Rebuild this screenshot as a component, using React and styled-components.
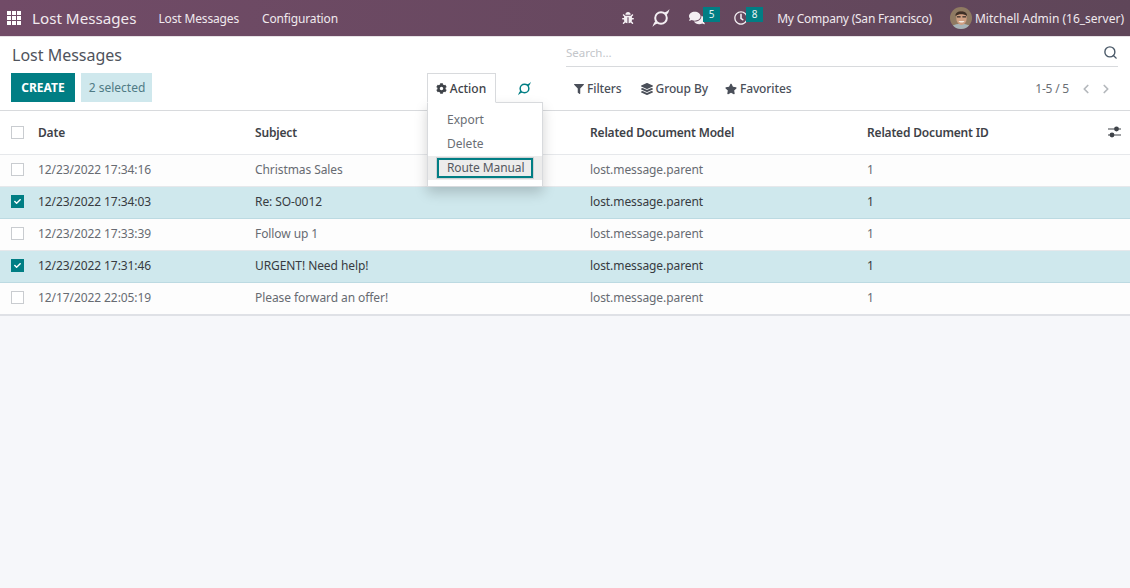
import React from 'react';
import styled, {createGlobalStyle} from 'styled-components';
import {FaBug, FaComments, FaRegClock, FaCog, FaFilter, FaLayerGroup, FaStar, FaCheck} from 'react-icons/fa';
import {FiSearch, FiChevronLeft, FiChevronRight} from 'react-icons/fi';

const GlobalStyle = createGlobalStyle`
    html, body {
        margin: 0;
        background: #f6f7fa;
    }
    body {
        font-family: "Noto Sans", sans-serif;
        font-size: 12px;
        color: #4a4f59;
    }
`;

const Page = styled.div`
    width: 1130px;
    height: 588px;
    overflow: hidden;
    background: #f6f7fa;
`;

const NavBar = styled.header`
    height: 36px;
    display: flex;
    align-items: center;
    padding: 0 6px 0 7px;
    background: linear-gradient(90deg, #714b67, #5f4659);
    color: #f0e9ee;
    border-bottom: 1px solid #e6e2e5;
`;

const AppsGrid = styled.div`
    display: grid;
    grid-template-columns: repeat(3, 4px);
    grid-auto-rows: 4px;
    gap: 1px;
    margin-right: 11px;
    span {
        background: #fff;
    }
`;

const Brand = styled.span`
    font-size: 15.2px;
    margin-right: 22px;
`;

const NavLink = styled.span`
    font-size: 12px;
    letter-spacing: -0.15px;
    margin-right: 23px;
`;

const SysTray = styled.div`
    margin-left: auto;
    display: flex;
    align-items: center;
`;

const TrayIcon = styled.span`
    display: flex;
    align-items: center;
    position: relative;
    margin-left: ${p => p.$gap || 0}px;
    color: #f4eff3;
`;

const TrayBadge = styled.span`
    position: absolute;
    left: ${p => p.$left}px;
    top: ${p => p.$top}px;
    width: 17px;
    height: 15px;
    background: #017e84;
    color: #e8f4f4;
    font-size: 10px;
    line-height: 15px;
    text-align: center;
`;

const TrayText = styled.span`
    font-size: 12px;
    letter-spacing: ${p => p.$tight || 0}px;
    margin-left: ${p => p.$gap}px;
    white-space: nowrap;
`;

const ControlPanel = styled.section`
    height: 73px;
    display: grid;
    grid-template-columns: 566px 552px;
    background: #fff;
    border-bottom: 1px solid #d8dadd;
`;

const LeftPanel = styled.div`
    display: flex;
    flex-direction: column;
    padding-left: 12px;
`;

const Title = styled.h1`
    margin: 0;
    height: 36px;
    line-height: 37px;
    font-size: 16px;
    font-weight: 400;
    color: #4f535c;
`;

const ButtonRow = styled.div`
    display: flex;
    align-items: flex-start;
    position: relative;
`;

const CreateButton = styled.button`
    width: 64px;
    height: 29px;
    margin-left: -1px;
    padding: 0;
    background: #017e84;
    border: 1px solid #017e84;
    color: #fff;
    font: 700 12px "Noto Sans", sans-serif;
`;

const SelectedBadge = styled.div`
    width: 71px;
    height: 29px;
    margin-left: 6px;
    padding-left: 1px;
    box-sizing: border-box;
    background: #cfe8ed;
    color: #4f7b85;
    font-size: 12px;
    line-height: 29px;
    text-align: center;
`;

const ActionWrap = styled.div`
    position: relative;
    margin-left: 275px;
`;

const ActionButton = styled.button`
    position: relative;
    z-index: 3;
    width: 69px;
    height: 30px;
    padding: 0 1px 0 0;
    display: flex;
    align-items: center;
    justify-content: center;
    gap: 3px;
    background: #fff;
    border: 1px solid #d8dadd;
    border-bottom-color: #fff;
    color: #3e4248;
    font: 500 12px "Noto Sans", sans-serif;
`;

const DropMenu = styled.div`
    position: absolute;
    z-index: 2;
    left: 0;
    top: 29px;
    width: 116px;
    height: 85px;
    box-sizing: border-box;
    padding-top: 5px;
    background: #fff;
    border: 1px solid #d8dadd;
    box-shadow: 0 6px 12px rgba(0, 0, 0, 0.18);
`;

const MenuItem = styled.div`
    height: 24px;
    line-height: 24px;
    padding-left: 19px;
    font-size: 12px;
    color: #6a6e74;
`;

const ActiveItem = styled(MenuItem)`
    background: #ececec;
    padding: 2px 0 0 9px;
    height: 22px;
    color: #55595f;
`;

const FocusBox = styled.div`
    height: 20px;
    width: 96px;
    box-sizing: border-box;
    border: 2px solid #017e84;
    outline: 1px solid #cfd2d4;
    padding-left: 8px;
    white-space: nowrap;
    line-height: 16px;
    letter-spacing: -0.1px;
`;

const SyncButton = styled.span`
    margin: 8px 0 0 21px;
    display: flex;
`;

const RightPanel = styled.div`
    display: flex;
    flex-direction: column;
`;

const SearchBar = styled.div`
    height: 28px;
    margin-top: 1px;
    display: flex;
    align-items: center;
    justify-content: space-between;
    border-bottom: 1px solid #d8dadd;
    color: #c3c6ca;
    font-size: 11.5px;
    svg {
        color: #4a5968;
        stroke-width: 2.2;
    }
`;

const FilterRow = styled.div`
    display: flex;
    align-items: center;
    height: 43px;
    padding-left: 8px;
`;

const FilterItem = styled.span`
    display: flex;
    align-items: center;
    gap: 3px;
    margin-right: ${p => p.$gap || 18}px;
    font-size: 12px;
    font-weight: 500;
    letter-spacing: -0.1px;
    color: #4a4f59;
`;

const Pager = styled.div`
    margin-left: auto;
    margin-right: 5px;
    display: flex;
    align-items: center;
    font-size: 12px;
    letter-spacing: -0.2px;
    color: #6a6e74;
    svg {
        color: #b4b8bc;
        stroke-width: 3;
        margin-left: 6px;
    }
    span {
        margin-right: 4px;
    }
`;

const Columns = styled.div`
    display: grid;
    grid-template-columns: 38px 217px 335px 277px 1fr 30px;
    align-items: center;
`;

const HeaderRow = styled(Columns)`
    height: 42px;
    padding-bottom: 1px;
    background: #fff;
    border-bottom: 1px solid #e6e8eb;
    font-weight: 600;
    letter-spacing: -0.18px;
    color: #3e4248;
    font-size: 12px;
`;

const Row = styled(Columns)`
    height: 29px;
    padding-bottom: 2px;
    background: ${p => (p.$selected ? '#cfe8ed' : '#fdfdfd')};
    border-bottom: 1px solid ${p => (p.$selected ? '#bcdae2' : '#e6e8eb')};
    color: ${p => (p.$selected ? '#373b41' : '#676b72')};
    font-size: 12px;
    letter-spacing: -0.08px;
    &:last-child {
        border-bottom: 2px solid #dfe1e6;
    }
`;

const CheckBox = styled.span`
    width: 13px;
    height: 13px;
    margin-left: 11px;
    box-sizing: border-box;
    display: flex;
    align-items: center;
    justify-content: center;
    background: ${p => (p.$checked ? '#017e84' : '#fff')};
    border: 1px solid ${p => (p.$checked ? '#017e84' : '#c9ccd0')};
    color: #fff;
`;

const OptionsCell = styled.span`
    display: flex;
    justify-content: flex-end;
    padding-right: 9px;
`;

const OdooSync = ({size, color}) => (
    <svg width={size} height={size} viewBox="0 0 20 20">
        <circle cx="10" cy="10" r="5.8" fill="none" stroke={color} strokeWidth="2" />
        <path d="M18.5 1 C17 3 15.5 4 13 4.5 L15.5 7 C17 5.5 18 3.5 18.5 1Z" fill={color} />
        <path d="M1.5 19 C3 17 4.5 16 7 15.5 L4.5 13 C3 14.5 2 16.5 1.5 19Z" fill={color} />
    </svg>
);

const SlidersIcon = () => (
    <svg width="13" height="12" viewBox="0 0 13 12" fill="#3e4248">
        <rect x="0" y="2.5" width="13" height="1" />
        <rect x="0" y="8.5" width="13" height="1" />
        <circle cx="8.5" cy="3" r="2.4" />
        <circle cx="4" cy="9" r="2.4" />
    </svg>
);

const Avatar = () => (
    <svg width="22" height="22" viewBox="0 0 22 22">
        <clipPath id="avatar-clip"><circle cx="11" cy="11" r="11" /></clipPath>
        <g clipPath="url(#avatar-clip)">
            <rect width="22" height="22" fill="#8f7a62" />
            <path d="M0 22 C2 17 7 17 11 17 C15 17 20 17 22 22Z" fill="#a8b4b8" />
            <ellipse cx="11.5" cy="11" rx="5.2" ry="7" fill="#cf9f82" />
            <path d="M5.5 9 C4.5 2.5 18 2.5 17 9 C14 6.5 8.5 6.5 5.5 9Z" fill="#3e2f26" />
            <rect x="7" y="9" width="3.6" height="1.6" fill="#54433a" />
            <rect x="12.4" y="9" width="3.6" height="1.6" fill="#54433a" />
            <path d="M8.5 14 C9.5 16 13.5 16 14.5 14Z" fill="#f3ece5" />
        </g>
    </svg>
);

const rows = [
    {date: '12/23/2022 17:34:16', subject: 'Christmas Sales'},
    {date: '12/23/2022 17:34:03', subject: 'Re: SO-0012', selected: true},
    {date: '12/23/2022 17:33:39', subject: 'Follow up 1'},
    {date: '12/23/2022 17:31:46', subject: 'URGENT! Need help!', selected: true},
    {date: '12/17/2022 22:05:19', subject: 'Please forward an offer!'},
];

const App = () => (
    <Page>
        <GlobalStyle />
        <NavBar>
            <AppsGrid>
                {Array.from({length: 9}, (_, i) => <span key={i} />)}
            </AppsGrid>
            <Brand>Lost Messages</Brand>
            <NavLink>Lost Messages</NavLink>
            <NavLink>Configuration</NavLink>
            <SysTray>
                <TrayIcon><FaBug size={12} /></TrayIcon>
                <TrayIcon $gap={17}><OdooSync size={20} color="#f4eff3" /></TrayIcon>
                <TrayIcon $gap={18}>
                    <FaComments size={16} />
                    <TrayBadge $left={14} $top={-3}>5</TrayBadge>
                </TrayIcon>
                <TrayIcon $gap={29}>
                    <FaRegClock size={14} />
                    <TrayBadge $left={12} $top={-4}>8</TrayBadge>
                </TrayIcon>
                <TrayText $gap={29} $tight={-0.23}>My Company (San Francisco)</TrayText>
                <TrayIcon $gap={18}><Avatar /></TrayIcon>
                <TrayText $gap={3}>Mitchell Admin (16_server)</TrayText>
            </SysTray>
        </NavBar>

        <ControlPanel>
            <LeftPanel>
                <Title>Lost Messages</Title>
                <ButtonRow>
                    <CreateButton>CREATE</CreateButton>
                    <SelectedBadge>2 selected</SelectedBadge>
                    <ActionWrap>
                        <ActionButton><FaCog size={11} />Action</ActionButton>
                        <DropMenu>
                            <MenuItem>Export</MenuItem>
                            <MenuItem>Delete</MenuItem>
                            <ActiveItem><FocusBox>Route Manual</FocusBox></ActiveItem>
                        </DropMenu>
                    </ActionWrap>
                    <SyncButton><OdooSync size={15} color="#017e84" /></SyncButton>
                </ButtonRow>
            </LeftPanel>
            <RightPanel>
                <SearchBar>Search...<FiSearch size={15} /></SearchBar>
                <FilterRow>
                    <FilterItem $gap={19}><FaFilter size={10} />Filters</FilterItem>
                    <FilterItem $gap={17}><FaLayerGroup size={12} />Group By</FilterItem>
                    <FilterItem><FaStar size={12} />Favorites</FilterItem>
                    <Pager>
                        <span>1-5 / 5</span>
                        <FiChevronLeft size={14} />
                        <FiChevronRight size={14} />
                    </Pager>
                </FilterRow>
            </RightPanel>
        </ControlPanel>

        <HeaderRow>
            <CheckBox />
            <span>Date</span>
            <span>Subject</span>
            <span>Related Document Model</span>
            <span>Related Document ID</span>
            <OptionsCell><SlidersIcon /></OptionsCell>
        </HeaderRow>
        {rows.map(row => (
            <Row key={row.date} $selected={row.selected}>
                <CheckBox $checked={row.selected}>
                    {row.selected && <FaCheck size={7} />}
                </CheckBox>
                <span>{row.date}</span>
                <span>{row.subject}</span>
                <span>lost.message.parent</span>
                <span>1</span>
                <span />
            </Row>
        ))}
    </Page>
);

export default App;
